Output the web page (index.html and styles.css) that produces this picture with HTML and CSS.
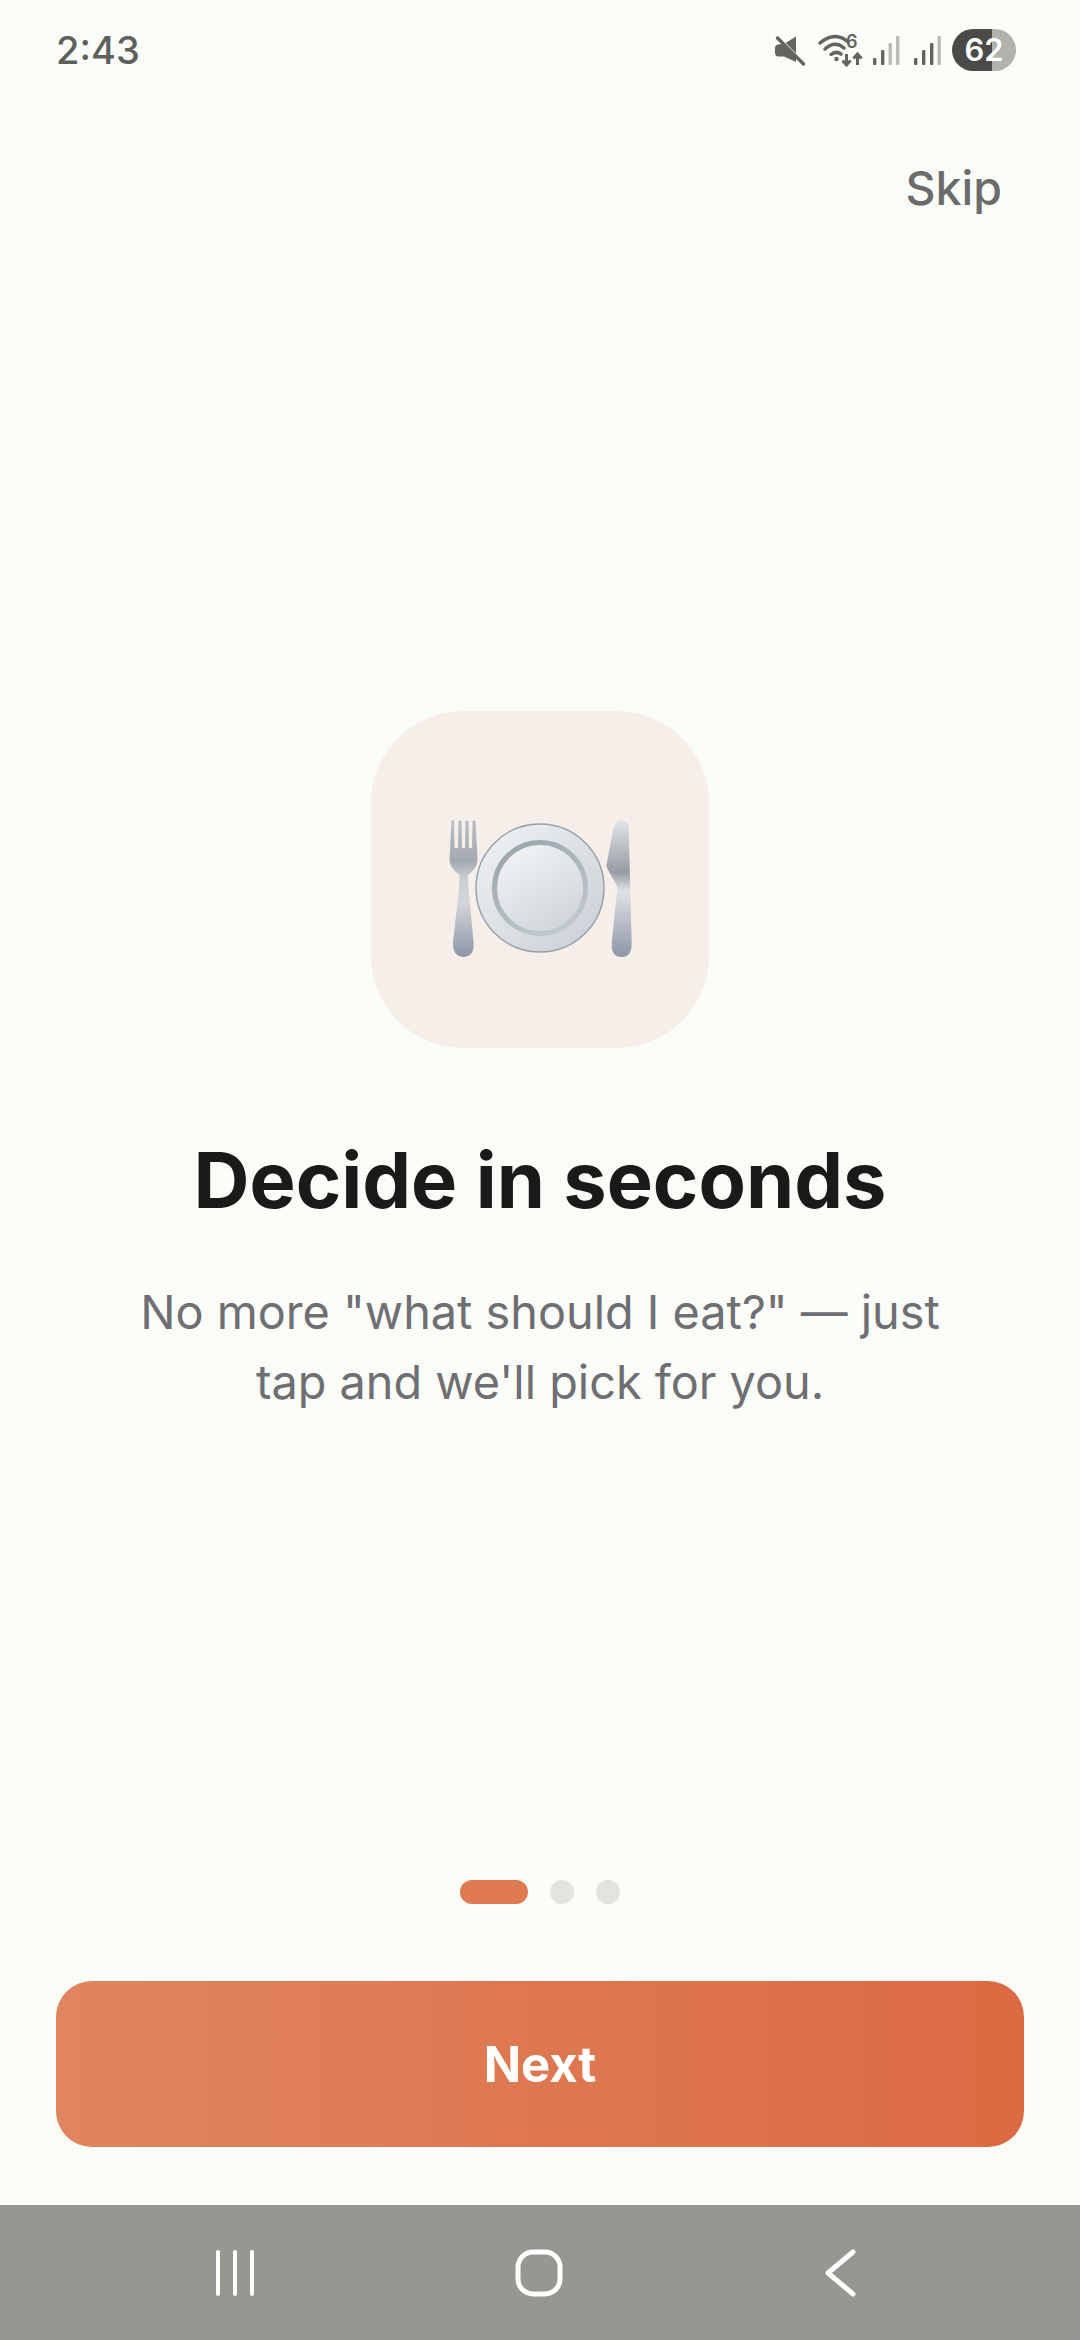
FILE: index.html
```html
<!DOCTYPE html>
<html lang="en">
<head>
<meta charset="utf-8">
<title>Decide in seconds</title>
<link rel="stylesheet" href="styles.css">
</head>
<body>
<div class="screen">
  <header class="status">
    <span class="time">2:43</span>
    <div class="status-icons">
      <svg class="status-svg" width="175" height="50" viewBox="0 0 175 50">
        <path class="ic-fill" d="M26 11.500V37L14 31.500H8Q5.500 31.500 5 28V23Q5 20 8 19.500L14 19Z"/>
        <path class="ic-gap" d="M5.500 9.500 L33 37.500"/>
        <path class="ic-slash" d="M7.500 13 L33.500 39"/>
        <g class="ic-wifi">
          <path d="M50 18Q64 6 77 16"/>
          <path d="M55 24Q65 15 74 23"/>
          <path d="M61 29.500Q66 25.500 71 29"/>
        </g>
        <circle class="ic-fill" cx="66.500" cy="34" r="2.200"/>
        <text class="ic-six" x="76" y="23">6</text>
        <path class="ic-arrow" d="M76.500 29V39M72.500 35.500L76.500 40L80.500 35.500"/>
        <path class="ic-arrow" d="M87.500 40V30M83.500 33.500L87.500 29L91.500 33.500"/>
        <rect class="ic-fill" x="103" y="33" width="3.400" height="7" rx="1"/>
        <rect class="ic-fill" x="111" y="25" width="3.400" height="15" rx="1"/>
        <rect class="ic-dim" x="118.500" y="18" width="3.400" height="22" rx="1"/>
        <rect class="ic-dim" x="126" y="11" width="3.400" height="29" rx="1"/>
        <rect class="ic-fill" x="144" y="33" width="3.400" height="7" rx="1"/>
        <rect class="ic-fill" x="152" y="25" width="3.400" height="15" rx="1"/>
        <rect class="ic-fill" x="160" y="18" width="3.400" height="22" rx="1"/>
        <rect class="ic-dim" x="167.500" y="11" width="3.400" height="29" rx="1"/>
      </svg>
      <span class="battery">62</span>
    </div>
  </header>

  <div class="skip-row"><span class="skip">Skip</span></div>

  <main class="hero">
    <div class="icon-box">
      <svg width="200" height="160" viewBox="0 0 200 160">
        <defs>
          <linearGradient id="metal" x1="0" y1="0" x2="0" y2="1">
            <stop offset="0" stop-color="#b9bec4"/>
            <stop offset="0.3" stop-color="#a4aab1"/>
            <stop offset="0.42" stop-color="#c9cdd2"/>
            <stop offset="0.6" stop-color="#d3d7db"/>
            <stop offset="1" stop-color="#8d95a8"/>
          </linearGradient>
          <linearGradient id="knife" x1="0" y1="0" x2="0" y2="1">
            <stop offset="0" stop-color="#e2e5e8"/>
            <stop offset="0.38" stop-color="#969ca3"/>
            <stop offset="0.52" stop-color="#dfe2e5"/>
            <stop offset="1" stop-color="#8d95a8"/>
          </linearGradient>
          <linearGradient id="rim" x1="0" y1="0" x2="1" y2="1">
            <stop offset="0" stop-color="#f0f3f4"/>
            <stop offset="1" stop-color="#c7ced4"/>
          </linearGradient>
          <linearGradient id="ring" x1="0.2" y1="0" x2="0.8" y2="1">
            <stop offset="0" stop-color="#9aa5ac"/>
            <stop offset="1" stop-color="#c3cbd0"/>
          </linearGradient>
          <linearGradient id="well" x1="0.2" y1="0" x2="0.8" y2="1">
            <stop offset="0" stop-color="#f3f5f6"/>
            <stop offset="1" stop-color="#ccd3d8"/>
          </linearGradient>
        </defs>
        <path class="cutlery" fill="url(#metal)" d="M11.500 13Q13 11 14 13L14.500 40H18L18.500 13Q20 11.500 21.500 13L22 40H25L25.500 13Q27 11.500 28.500 13L29 40H32L32.500 13Q34 11.500 35.500 13L37.500 50Q38 60 28.500 66.500Q27.500 68 28.500 80L33.500 134Q35 148 23.500 149Q12 148 13 134L19 80Q20 68 19 66.500Q9 60 9.500 50Z"/>
        <circle cx="100" cy="80" r="64" fill="url(#rim)" stroke="#98a1a9" stroke-width="1.500"/>
        <circle cx="100" cy="80" r="45.500" fill="url(#well)" stroke="url(#ring)" stroke-width="5"/>
        <path class="cutlery" fill="url(#knife)" d="M167 54L172 28Q174 12 181.500 12Q188.500 12 188.700 20L191.700 135Q192 149 181.500 149Q171 149 171.700 135L177.500 79L167 60Q166 58 167 54Z"/>
      </svg>
    </div>
    <h1 class="title">Decide in seconds</h1>
    <p class="desc">No more "what should I eat?" — just<br>tap and we'll pick for you.</p>
  </main>

  <div class="dots">
    <span class="dot dot-active"></span>
    <span class="dot"></span>
    <span class="dot"></span>
  </div>

  <div class="cta"><button class="next">Next</button></div>

  <nav class="navbar">
    <svg width="38" height="46" viewBox="0 0 38 46"><path class="nav-line thin" d="M2 2V44M19 2V44M36 2V44"/></svg>
    <svg width="48" height="48" viewBox="0 0 48 48"><rect class="nav-line" x="3" y="3" width="42" height="42" rx="15"/></svg>
    <svg width="32" height="48" viewBox="0 0 32 48"><path class="nav-line" d="M29 3L4 24L29 45"/></svg>
  </nav>
</div>
</body>
</html>
```

FILE: styles.css
```css
* { box-sizing: border-box; }
html, body { margin: 0; padding: 0; }
body { font-family: Inter, "Open Sans", sans-serif; background: #fafcf7; }

.screen {
  width: 1080px;
  height: 2340px;
  display: flex;
  flex-direction: column;
  background: #fafcf7;
  overflow: hidden;
}

.status {
  height: 100px;
  padding: 0 64px 0 56px;
  display: flex;
  align-items: center;
  justify-content: space-between;
}
.time { font-size: 38px; font-weight: 550; color: #5e605c; }
.status-icons { display: flex; align-items: center; gap: 7px; }
.status-svg { display: block; }
.ic-fill { fill: #62645f; }
.ic-dim { fill: #b9bbb5; }
.ic-gap { stroke: #fafcf7; stroke-width: 3; fill: none; }
.ic-slash { stroke: #62645f; stroke-width: 3.500; stroke-linecap: round; fill: none; }
.ic-wifi path { fill: none; stroke: #62645f; stroke-width: 3.500; stroke-linecap: round; }
.ic-six { font-family: Inter, sans-serif; font-size: 18px; font-weight: 600; fill: #62645f; }
.ic-arrow { fill: none; stroke: #62645f; stroke-width: 3; }
.battery {
  width: 64px;
  height: 42px;
  border-radius: 21px;
  background: linear-gradient(90deg, #4a4b49 0, #4a4b49 40px, #b0b2ab 40px, #b0b2ab 100%);
  color: #fff;
  font-size: 31px;
  font-weight: 600;
  display: flex;
  align-items: center;
  justify-content: center;
}

.skip-row { height: 176px; padding: 56px 78px 0 0; display: flex; justify-content: flex-end; }
.skip { font-size: 46.500px; line-height: 64px; font-weight: 550; color: #6b6b6b; }

.hero { display: flex; flex-direction: column; align-items: center; }
.icon-box {
  margin-top: 436px;
  width: 338px;
  height: 337px;
  border-radius: 92px;
  background: #f6efe9;
  display: flex;
  align-items: center;
  justify-content: center;
  padding-top: 16px;
}
.title {
  margin: 87px 0 0;
  font-size: 77.500px;
  line-height: 90px;
  font-weight: 700;
  color: #1a1a1a;
}
.desc {
  margin: 52px 0 0;
  font-size: 46.800px;
  line-height: 70px;
  font-weight: 400;
  color: #6e6e73;
  text-align: center;
}

.dots { margin-top: 463px; display: flex; justify-content: center; gap: 22px; }
.dot { width: 24px; height: 24px; border-radius: 50%; background: #e2e4df; }
.dot-active { width: 68px; border-radius: 12px; background: #e07a50; }

.cta { margin-top: 77px; padding: 0 56px; }
.next {
  width: 100%;
  height: 166px;
  border: none;
  border-radius: 36px;
  background: linear-gradient(90deg, #e0855f, #dc6a43);
  color: #fff;
  font-family: inherit;
  font-size: 49px;
  font-weight: 700;
}

.navbar {
  margin-top: 58px;
  height: 135px;
  background: #959790;
  display: flex;
  align-items: center;
  padding: 0 224px 0 216px;
  justify-content: space-between;
}
.nav-line { fill: none; stroke: #fff; stroke-width: 5; stroke-linecap: round; stroke-linejoin: round; }
.thin { stroke-width: 4; }
```
